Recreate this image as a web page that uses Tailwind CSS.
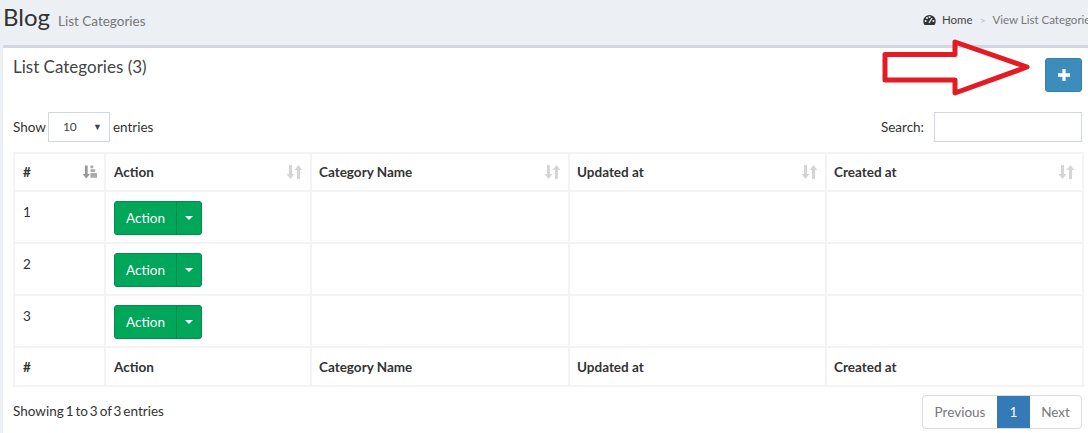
<!DOCTYPE html>
<html lang="en">
<head>
<meta charset="UTF-8" />
<title>List Categories</title>
<script src="https://cdn.jsdelivr.net/npm/@tailwindcss/browser@4"></script>
</head>
<body class="bg-[#ecf0f5] font-['Lato','Noto_Sans',sans-serif] text-[13.5px] text-[#333]">
<div class="relative w-[1088px] h-[433px] overflow-hidden">
  <!-- page header -->
  <div class="h-[45px] pl-[3px] flex items-start justify-between">
    <div class="flex items-baseline gap-[8px]">
      <h1 class="text-[24px] leading-[33px] text-[#333]">Blog</h1>
      <span class="text-[13.5px] text-[#777]">List Categories</span>
    </div>
    <div class="flex items-center whitespace-nowrap text-[11.5px] h-[40px] w-[165px] shrink-0 text-[#444]">
      <svg class="w-[13px] h-[12px] mr-[6px] shrink-0" viewBox="0 0 13 12"><path fill="#333" d="M6.5 1A6.2 6.2 0 0 0 .3 7.2c0 1.5.5 2.8 1.3 3.8h9.8c.8-1 1.3-2.3 1.3-3.8A6.2 6.2 0 0 0 6.5 1z"/><circle cx="2.6" cy="7" r="1" fill="#ecf0f5"/><circle cx="4" cy="4" r="1" fill="#ecf0f5"/><circle cx="6.5" cy="2.9" r="1" fill="#ecf0f5"/><circle cx="10.4" cy="7" r="1" fill="#ecf0f5"/><path stroke="#ecf0f5" stroke-width="1.3" d="M6 9 9 4"/></svg>
      <span>Home</span>
      <span class="mx-[7px] text-[#bbb] text-[10px]">&gt;</span>
      <span class="text-[#777]">View List Categories</span>
    </div>
  </div>

  <!-- box -->
  <div class="ml-[3px] h-[388px] bg-white border-t-[3px] border-[#d2d6de] pl-[10px] pr-[6px]">
    <div class="h-[64px] flex justify-between items-start">
      <h3 class="text-[17px] leading-[20px] pt-[9px] text-[#444]">List Categories (3)</h3>
      <button class="mt-[10px] w-[37px] h-[34px] flex items-center justify-center rounded-[3px] bg-[#3c8dbc] border border-[#367fa9]">
        <svg class="w-[12px] h-[12px]" viewBox="0 0 11 11"><path fill="#fff" d="M4 0h3v4h4v3H7v4H4V7H0V4h4z"/></svg>
      </button>
    </div>
    <div class="h-[40px] flex justify-between items-start">
      <label class="flex items-center gap-[2px] h-[30px]">Show
        <span class="w-[62px] h-[30px] mr-[1px] border border-[#d2d6de] flex items-center justify-between pl-[14px] pr-[7px] text-[12px] text-[#444]">10<span class="text-[9px]">▼</span></span>
        entries</label>
      <label class="flex items-center gap-[10px] h-[30px]">Search:
        <span class="block w-[148px] h-[30px] border border-[#d2d6de]"></span>
      </label>
    </div>

    <table class="w-[1069px] table-fixed border-collapse">
      <colgroup><col class="w-[91px]"/><col class="w-[206px]"/><col class="w-[258px]"/><col class="w-[257px]"/><col class="w-[257px]"/></colgroup>
      <thead>
        <tr class="h-[38px] font-bold">
          <th class="border-2 border-[#f4f4f4] px-[8px] text-left"><div class="flex items-center justify-between">#<svg class="w-[14px] h-[15px] -mr-[1px]" viewBox="0 0 15 15"><path fill="#999" d="M2 0h3v9h2.500L3.500 14-.500 9H2z"/><path fill="#aaa" d="M8 0h3v3H8zM8 4h5v3H8zM8 8h7v5H8z"/></svg></div></th>
          <th class="border-2 border-[#f4f4f4] px-[8px] text-left"><div class="flex items-center justify-between">Action<svg class="w-[15px] h-[15px]" viewBox="0 0 15 15"><path fill="#d5d5d5" d="M2 0h3v9h2.500L3.500 14-.500 9H2zM10 14V5H7.500l4-5 4 5H13v9z"/></svg></div></th>
          <th class="border-2 border-[#f4f4f4] pl-[7px] pr-[8px] text-left"><div class="flex items-center justify-between">Category Name<svg class="w-[15px] h-[15px]" viewBox="0 0 15 15"><path fill="#d5d5d5" d="M2 0h3v9h2.500L3.500 14-.500 9H2zM10 14V5H7.500l4-5 4 5H13v9z"/></svg></div></th>
          <th class="border-2 border-[#f4f4f4] pl-[7px] pr-[8px] text-left"><div class="flex items-center justify-between">Updated at<svg class="w-[15px] h-[15px]" viewBox="0 0 15 15"><path fill="#d5d5d5" d="M2 0h3v9h2.500L3.500 14-.500 9H2zM10 14V5H7.500l4-5 4 5H13v9z"/></svg></div></th>
          <th class="border-2 border-[#f4f4f4] pl-[7px] pr-[8px] text-left"><div class="flex items-center justify-between">Created at<svg class="w-[15px] h-[15px]" viewBox="0 0 15 15"><path fill="#d5d5d5" d="M2 0h3v9h2.500L3.500 14-.500 9H2zM10 14V5H7.500l4-5 4 5H13v9z"/></svg></div></th>
        </tr>
      </thead>
      <tbody>
        <tr class="h-[52px]">
          <td class="border-2 border-[#f4f4f4] px-[8px] align-top pt-[10px]">1</td>
          <td class="border-2 border-[#f4f4f4] px-[8px] pt-[2px]"><div class="flex w-[88px] h-[34px] rounded-[3px] bg-[#00a65a] border border-[#008d4c] text-white"><span class="w-[62px] flex items-center justify-center border-r border-[#008d4c]">Action</span><span class="flex-1 flex items-center justify-center"><span class="w-0 h-0 border-x-4 border-t-4 border-x-transparent border-t-white"></span></span></div></td>
          <td class="border-2 border-[#f4f4f4]"></td><td class="border-2 border-[#f4f4f4]"></td><td class="border-2 border-[#f4f4f4]"></td>
        </tr>
        <tr class="h-[52px]">
          <td class="border-2 border-[#f4f4f4] px-[8px] align-top pt-[10px]">2</td>
          <td class="border-2 border-[#f4f4f4] px-[8px] pt-[2px]"><div class="flex w-[88px] h-[34px] rounded-[3px] bg-[#00a65a] border border-[#008d4c] text-white"><span class="w-[62px] flex items-center justify-center border-r border-[#008d4c]">Action</span><span class="flex-1 flex items-center justify-center"><span class="w-0 h-0 border-x-4 border-t-4 border-x-transparent border-t-white"></span></span></div></td>
          <td class="border-2 border-[#f4f4f4]"></td><td class="border-2 border-[#f4f4f4]"></td><td class="border-2 border-[#f4f4f4]"></td>
        </tr>
        <tr class="h-[52px]">
          <td class="border-2 border-[#f4f4f4] px-[8px] align-top pt-[10px]">3</td>
          <td class="border-2 border-[#f4f4f4] px-[8px] pt-[2px]"><div class="flex w-[88px] h-[34px] rounded-[3px] bg-[#00a65a] border border-[#008d4c] text-white"><span class="w-[62px] flex items-center justify-center border-r border-[#008d4c]">Action</span><span class="flex-1 flex items-center justify-center"><span class="w-0 h-0 border-x-4 border-t-4 border-x-transparent border-t-white"></span></span></div></td>
          <td class="border-2 border-[#f4f4f4]"></td><td class="border-2 border-[#f4f4f4]"></td><td class="border-2 border-[#f4f4f4]"></td>
        </tr>
      </tbody>
      <tfoot>
        <tr class="h-[39px] font-bold">
          <td class="border-2 border-[#f4f4f4] px-[8px] pt-[2px]">#</td>
          <td class="border-2 border-[#f4f4f4] px-[8px] pt-[2px]">Action</td>
          <td class="border-2 border-[#f4f4f4] pl-[7px] pt-[2px]">Category Name</td>
          <td class="border-2 border-[#f4f4f4] pl-[7px] pt-[2px]">Updated at</td>
          <td class="border-2 border-[#f4f4f4] pl-[7px] pt-[2px]">Created at</td>
        </tr>
      </tfoot>
    </table>

    <div class="w-[1069px] mt-[8px] flex justify-between items-start">
      <span class="pt-[6px] [word-spacing:-1.5px]">Showing 1 to 3 of 3 entries</span>
      <div class="flex h-[34px] border border-[#ddd] rounded-[4px] overflow-hidden text-[#777]">
        <span class="w-[74px] flex items-center justify-center">Previous</span>
        <span class="w-[33px] flex items-center justify-center bg-[#337ab7] text-white">1</span>
        <span class="w-[51px] flex items-center justify-center">Next</span>
      </div>
    </div>
  </div>

  <!-- red annotation arrow drawn over the page -->
  <svg class="absolute left-[880px] top-[37px] w-[152px] h-[60px]" viewBox="880 37 152 60"><path fill="none" stroke="#e31b23" stroke-width="5" stroke-linejoin="round" d="M885 54.500H955V42L1027 67 955 93V80H885Z"/></svg>
</div>
</body>
</html>
